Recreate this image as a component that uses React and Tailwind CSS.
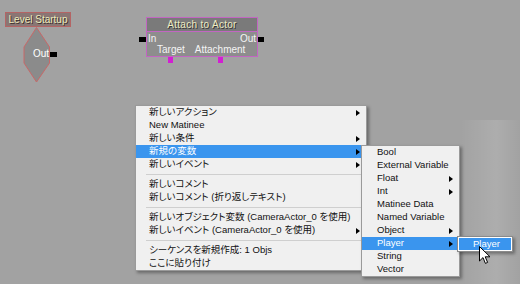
import React from 'react'

const menuFont = "font-['Liberation_Sans','Noto_Sans_CJK_JP',sans-serif] text-[9.5px] [font-feature-settings:'palt']"

function Arrow() {
  return (
    <svg width="4" height="6" viewBox="0 0 4 6" className="absolute right-[6px] top-[4px]">
      <polygon points="0,0 4,3 0,6" fill="#000" />
    </svg>
  )
}

function Item({ label, sub, active }) {
  return (
    <div className={`relative h-[13px] flex items-center pl-[13px] whitespace-nowrap ${active ? 'bg-[#3a95ee] text-white' : 'text-[#111]'}`}>
      {label}
      {sub && <Arrow />}
    </div>
  )
}

function Sep() {
  return (
    <div className="h-[7px] flex items-center pl-[10px] pr-[2px]">
      <div className="h-px w-full bg-[#cfcfcf]" />
    </div>
  )
}

const mainItems = [
  { label: '新しいアクション', sub: true },
  { label: 'New Matinee' },
  { label: '新しい条件', sub: true },
  { label: '新規の変数', sub: true, active: true },
  { label: '新しいイベント', sub: true },
  'sep',
  { label: '新しいコメント' },
  { label: '新しいコメント (折り返しテキスト)' },
  'sep',
  { label: '新しいオブジェクト変数 (CameraActor_0 を使用)' },
  { label: '新しいイベント (CameraActor_0 を使用)', sub: true },
  'sep',
  { label: 'シーケンスを新規作成: 1 Objs' },
  { label: 'ここに貼り付け' },
]

const varItems = [
  { label: 'Bool' },
  { label: 'External Variable' },
  { label: 'Float', sub: true },
  { label: 'Int', sub: true },
  { label: 'Matinee Data' },
  { label: 'Named Variable' },
  { label: 'Object', sub: true },
  { label: 'Player', sub: true, active: true },
  { label: 'String' },
  { label: 'Vector' },
]

export default function App() {
  const nodeFont = "font-['Liberation_Sans',sans-serif] text-[10px] leading-none"
  return (
    <div className="relative w-[520px] h-[284px] overflow-hidden bg-[#a2a2a2]">
      {/* light streak on the right */}
      <div className="absolute right-0 top-[120px] w-[60px] h-[164px] bg-[linear-gradient(90deg,rgba(255,255,255,0)_0%,rgba(255,255,255,0.12)_60%,rgba(255,255,255,0)_100%)]" />

      {/* Level Startup node */}
      <div className={`absolute left-[5px] top-[12px] w-[66px] h-[15px] border border-[#b46464] bg-[#8a7674] flex items-center justify-center text-[#ecebbd] [text-shadow:1px_1px_0_#3a3030] ${nodeFont}`}>
        Level Startup
      </div>
      <svg className="absolute left-[23px] top-[27px]" width="28" height="56" viewBox="0 0 28 56">
        <polygon points="13.5,0.5 1,20 1,36 13.5,55 26.5,36 26.5,20" fill="#8b8b8b" stroke="#c76868" strokeWidth="1" />
      </svg>
      <div className={`absolute left-[33px] top-[49px] text-white ${nodeFont}`}>Out</div>
      <div className="absolute left-[50px] top-[52px] w-[7px] h-[5px] bg-black" />

      {/* Attach to Actor node */}
      <div className={`absolute left-[146px] top-[17px] w-[112px] border border-[#c266c2] ${nodeFont}`}>
        <div className="h-[14px] bg-[#7a7a7a] border-b border-[#c266c2] flex items-center justify-center text-[#ecebc4] tracking-[0.3px] [text-shadow:1px_1px_0_#333]">
          Attach to Actor
        </div>
        <div className="bg-[#8d8d8d] text-[#f4f4f4] h-[24px] flex flex-col">
          <div className="flex justify-between px-[1px] pt-[2px]">
            <span>In</span>
            <span>Out</span>
          </div>
          <div className="flex pt-[1px] pl-[10px] gap-[10px]">
            <span>Target</span>
            <span>Attachment</span>
          </div>
        </div>
      </div>
      <div className="absolute left-[139px] top-[37px] w-[7px] h-[5px] bg-black" />
      <div className="absolute left-[258px] top-[37px] w-[6px] h-[5px] bg-black" />
      <div className="absolute left-[168px] top-[57px] w-[5px] h-[6px] bg-[#d21fd2]" />
      <div className="absolute left-[218px] top-[57px] w-[5px] h-[6px] bg-[#d21fd2]" />

      {/* context menu */}
      <div className={`absolute left-[135px] top-[105px] w-[232px] border border-[#9a9a9a] bg-[#f0f0f0] shadow-[2px_2px_3px_rgba(0,0,0,0.35)] ${menuFont}`}>
        {mainItems.map((it, i) => (it === 'sep' ? <Sep key={i} /> : <Item key={i} {...it} />))}
      </div>

      {/* variable submenu */}
      <div className={`absolute left-[361px] top-[145px] w-[99px] border border-[#9a9a9a] bg-[#f0f0f0] shadow-[2px_2px_3px_rgba(0,0,0,0.35)] ${menuFont}`}>
        {varItems.map((it, i) => (
          <div key={i} className={`relative h-[13px] flex items-center pl-[15px] whitespace-nowrap ${it.active ? 'bg-[#3a95ee] text-white' : 'text-[#111]'}`}>
            {it.label}
            {it.sub && <Arrow />}
          </div>
        ))}
      </div>

      {/* player submenu */}
      <div className={`absolute left-[457px] top-[236px] w-[56px] h-[16px] border border-[#8a8a8a] bg-[#3a95ee] shadow-[2px_2px_3px_rgba(0,0,0,0.35)] ${menuFont}`}>
        <div className="h-full border border-white flex items-center pl-[14px] text-white">Player</div>
      </div>

      {/* mouse cursor */}
      <svg className="absolute left-[479px] top-[246px]" width="12" height="19" viewBox="0 0 12 19">
        <path d="M0.5 0.5 L0.5 15 L4 11.6 L6.4 17.4 L8.6 16.4 L6.2 10.8 L11 10.8 Z" fill="#fff" stroke="#000" strokeWidth="1" strokeLinejoin="round" />
      </svg>
    </div>
  )
}
